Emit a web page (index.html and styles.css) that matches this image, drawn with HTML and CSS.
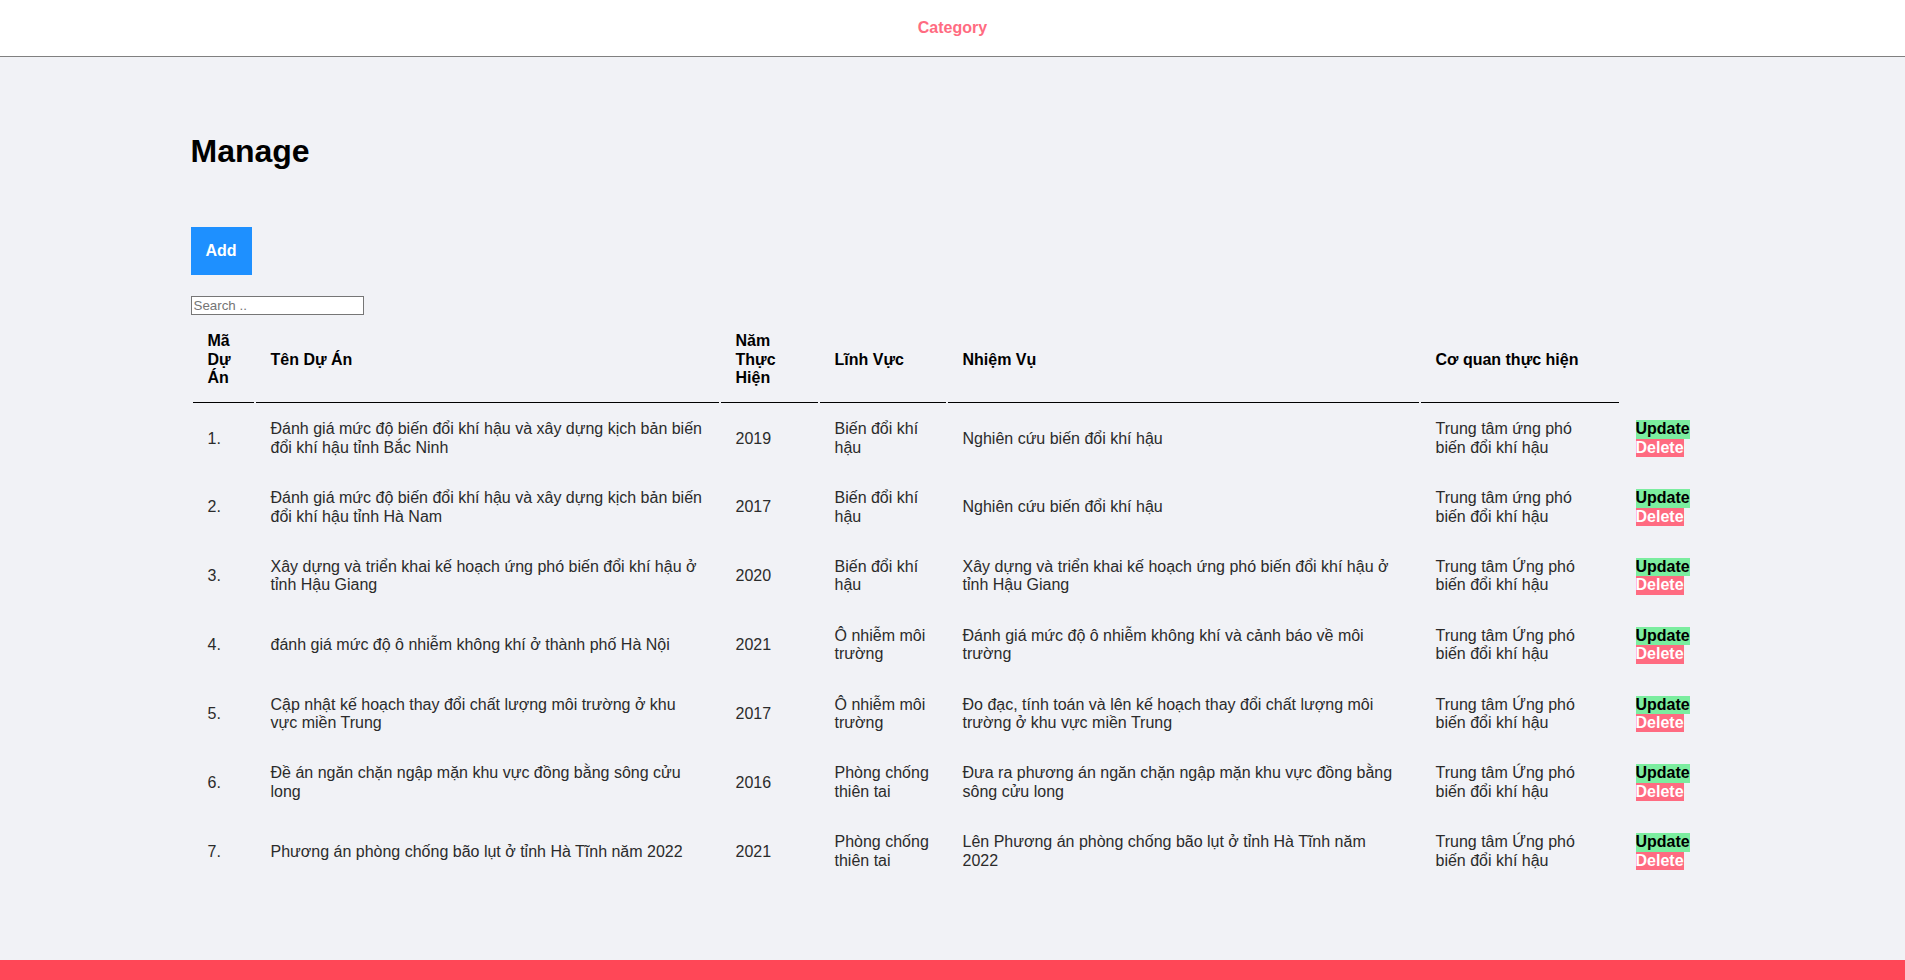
FILE: index.html
```html
<!DOCTYPE html>
<html lang="vi">
<head>
<meta charset="utf-8">
<title>Manage</title>
<link rel="stylesheet" href="styles.css">
</head>
<body>
<header class="topbar">
  <a class="topbar-link" href="#">Category</a>
</header>
<main class="page">
  <h1 class="page-title">Manage</h1>
  <button class="btn-add" type="button">Add</button>
  <input class="search" type="text" placeholder="Search ..">
  <table class="grid">
    <colgroup>
      <col class="c-id"><col class="c-name"><col class="c-year"><col class="c-field"><col class="c-task"><col class="c-org"><col>
    </colgroup>
    <thead>
      <tr>
        <th>Mã Dự Án</th>
        <th>Tên Dự Án</th>
        <th>Năm Thực Hiện</th>
        <th>Lĩnh Vực</th>
        <th>Nhiệm Vụ</th>
        <th>Cơ quan thực hiện</th>
        <th class="th-empty"></th>
      </tr>
    </thead>
    <tbody>
      <tr>
        <td>1.</td>
        <td>Đánh giá mức độ biến đổi khí hậu và xây dựng kịch bản biến đổi khí hậu tỉnh Bắc Ninh</td>
        <td>2019</td>
        <td>Biến đổi khí hậu</td>
        <td>Nghiên cứu biến đổi khí hậu</td>
        <td>Trung tâm ứng phó biến đổi khí hậu</td>
        <td><button class="act act-update" type="button">Update</button><button class="act act-delete" type="button">Delete</button></td>
      </tr>
      <tr>
        <td>2.</td>
        <td>Đánh giá mức độ biến đổi khí hậu và xây dựng kịch bản biến đổi khí hậu tỉnh Hà Nam</td>
        <td>2017</td>
        <td>Biến đổi khí hậu</td>
        <td>Nghiên cứu biến đổi khí hậu</td>
        <td>Trung tâm ứng phó biến đổi khí hậu</td>
        <td><button class="act act-update" type="button">Update</button><button class="act act-delete" type="button">Delete</button></td>
      </tr>
      <tr>
        <td>3.</td>
        <td>Xây dựng và triển khai kế hoạch ứng phó biến đổi khí hậu ở tỉnh Hậu Giang</td>
        <td>2020</td>
        <td>Biến đổi khí hậu</td>
        <td>Xây dựng và triển khai kế hoạch ứng phó biến đổi khí hậu ở tỉnh Hậu Giang</td>
        <td>Trung tâm Ứng phó biến đổi khí hậu</td>
        <td><button class="act act-update" type="button">Update</button><button class="act act-delete" type="button">Delete</button></td>
      </tr>
      <tr>
        <td>4.</td>
        <td>đánh giá mức độ ô nhiễm không khí ở thành phố Hà Nội</td>
        <td>2021</td>
        <td>Ô nhiễm môi trường</td>
        <td>Đánh giá mức độ ô nhiễm không khí và cảnh báo về môi trường</td>
        <td>Trung tâm Ứng phó biến đổi khí hậu</td>
        <td><button class="act act-update" type="button">Update</button><button class="act act-delete" type="button">Delete</button></td>
      </tr>
      <tr>
        <td>5.</td>
        <td>Cập nhật kế hoạch thay đổi chất lượng môi trường ở khu vực miền Trung</td>
        <td>2017</td>
        <td>Ô nhiễm môi trường</td>
        <td>Đo đạc, tính toán và lên kế hoạch thay đổi chất lượng môi trường ở khu vực miền Trung</td>
        <td>Trung tâm Ứng phó biến đổi khí hậu</td>
        <td><button class="act act-update" type="button">Update</button><button class="act act-delete" type="button">Delete</button></td>
      </tr>
      <tr>
        <td>6.</td>
        <td>Đề án ngăn chặn ngập mặn khu vực đồng bằng sông cửu long</td>
        <td>2016</td>
        <td>Phòng chống thiên tai</td>
        <td>Đưa ra phương án ngăn chặn ngập mặn khu vực đồng bằng sông cửu long</td>
        <td>Trung tâm Ứng phó biến đổi khí hậu</td>
        <td><button class="act act-update" type="button">Update</button><button class="act act-delete" type="button">Delete</button></td>
      </tr>
      <tr>
        <td>7.</td>
        <td>Phương án phòng chống bão lụt ở tỉnh Hà Tĩnh năm 2022</td>
        <td>2021</td>
        <td>Phòng chống thiên tai</td>
        <td>Lên Phương án phòng chống bão lụt ở tỉnh Hà Tĩnh năm 2022</td>
        <td>Trung tâm Ứng phó biến đổi khí hậu</td>
        <td><button class="act act-update" type="button">Update</button><button class="act act-delete" type="button">Delete</button></td>
      </tr>
    </tbody>
  </table>
</main>
<footer class="footer"></footer>
</body>
</html>
```

FILE: styles.css
```css
* {
  box-sizing: border-box;
}

html, body {
  margin: 0;
  padding: 0;
}

body {
  font-family: "Liberation Sans", Arial, sans-serif;
  font-size: 16px;
  line-height: 18.4px;
  background: #f1f2f6;
  color: #000;
  height: 980px;
  display: flex;
  flex-direction: column;
  overflow: hidden;
}

.topbar {
  height: 57px;
  background: #fff;
  border-bottom: 1px solid #808080;
  display: flex;
  align-items: center;
  justify-content: center;
  flex-shrink: 0;
}

.topbar-link {
  color: #ff6b81;
  font-weight: bold;
  text-decoration: none;
}

.page {
  width: 80%;
  margin: 0 auto;
  padding-top: 76px;
  flex: 1;
  display: flex;
  flex-direction: column;
  align-items: flex-start;
}

.page-title {
  font-size: 32px;
  font-weight: bold;
  margin: 0 0 57px;
  line-height: 36.8px;
}

.btn-add {
  background: #1e90ff;
  color: #fff;
  border: none;
  padding: 15px;
  font-family: inherit;
  font-size: 16px;
  font-weight: bold;
  line-height: 18.4px;
  margin: 0 0 21px;
}

.search {
  width: 173px;
  height: 19px;
  border: 1px solid #767676;
  padding: 0 2px;
  font-family: "Liberation Sans", Arial, sans-serif;
  font-size: 13.33px;
  line-height: normal;
  background: #fff;
  margin: 0;
}

.search::placeholder {
  color: #757575;
}

.grid {
  width: 100%;
  table-layout: fixed;
  border-spacing: 2px;
  border-collapse: separate;
}

.c-id { width: 61px; }
.c-name { width: 463px; }
.c-year { width: 97px; }
.c-field { width: 126px; }
.c-task { width: 471px; }
.c-org { width: 198px; }

.grid th,
.grid td {
  padding: 15px;
  text-align: left;
  vertical-align: middle;
  line-height: 18.4px;
}

.grid th {
  font-weight: bold;
  color: #000;
  border-bottom: 1px solid #000;
}

.grid th.th-empty {
  border-bottom: none;
}

.grid td {
  color: #2b2b2b;
}

.act {
  display: block;
  border: none;
  padding: 0;
  margin: 0;
  font-family: inherit;
  font-size: 16px;
  font-weight: bold;
  line-height: 18.4px;
}

.act-update {
  background: #7bed9f;
  color: #000;
}

.act-delete {
  background: #ff6b81;
  color: #fff;
}

.footer {
  height: 20px;
  background: #ff4757;
  flex-shrink: 0;
}
```
